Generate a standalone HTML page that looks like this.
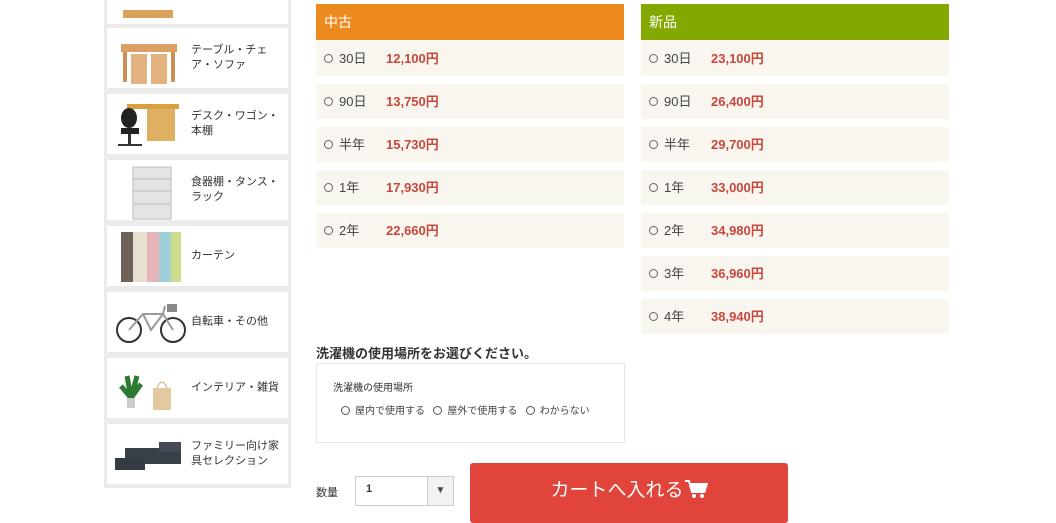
<!DOCTYPE html>
<html><head><meta charset="utf-8"><style>
*{margin:0;padding:0;box-sizing:border-box}
body{width:1056px;height:517px;overflow:hidden;background:#fff;font-family:"Liberation Sans","Noto Sans CJK JP",sans-serif;position:relative;color:#333}
.side{position:absolute;left:104px;top:-10px;width:187px;height:498px;background:#ebebeb}
.card{position:absolute;left:3px;width:181px;height:60px;background:#fff}
.card .t{position:absolute;left:84px;top:50%;transform:translateY(-50%);font-size:11px;line-height:15px;color:#333;width:92px}
.card svg{position:absolute;left:6px;top:4px}
.col{position:absolute;top:4px;width:308px}
.hd{height:36px;color:#fff;font-size:14px;line-height:36px;padding-left:8px}
.row{height:35px;background:#f9f6f0;margin-top:8px;font-size:13px;line-height:35px;padding-left:8px;color:#444;position:relative}
.hd+.row{margin-top:1px}
.row .c{display:inline-block;width:9px;height:9px;border:1px solid #666;border-radius:50%;margin-right:6px;vertical-align:0}
.row .p{color:#c9473b;font-weight:bold;position:absolute;left:70px}
</style></head><body>
<div class="side">
 <div class="card" style="top:-26px"><svg width="70" height="55"><rect x="10" y="42" width="50" height="8" fill="#d9a45a"/></svg></div>
 <div class="card" style="top:38px"><svg width="70" height="56"><rect x="8" y="12" width="56" height="8" fill="#dca063"/><rect x="10" y="20" width="4" height="30" fill="#c99157"/><rect x="58" y="20" width="4" height="30" fill="#c99157"/><rect x="18" y="22" width="16" height="30" fill="#e2b27f"/><rect x="38" y="22" width="16" height="30" fill="#e2b27f"/></svg><div class="t">テーブル・チェア・ソファ</div></div>
 <div class="card" style="top:104px"><svg width="70" height="56"><rect x="14" y="6" width="52" height="5" fill="#d9a040"/><rect x="34" y="11" width="28" height="32" fill="#dfb061"/><ellipse cx="16" cy="20" rx="8" ry="10" fill="#222"/><rect x="8" y="30" width="18" height="6" fill="#222"/><rect x="15" y="36" width="3" height="10" fill="#333"/><rect x="5" y="46" width="24" height="2" fill="#333"/></svg><div class="t">デスク・ワゴン・本棚</div></div>
 <div class="card" style="top:170px"><svg width="70" height="56"><rect x="20" y="3" width="38" height="52" fill="#e4e4e6" stroke="#bbb"/><line x1="20" y1="15" x2="58" y2="15" stroke="#bbb"/><line x1="20" y1="27" x2="58" y2="27" stroke="#bbb"/><line x1="20" y1="40" x2="58" y2="40" stroke="#bbb"/></svg><div class="t">食器棚・タンス・ラック</div></div>
 <div class="card" style="top:236px"><svg width="70" height="56"><rect x="8" y="2" width="12" height="50" fill="#6e6259"/><rect x="20" y="2" width="14" height="50" fill="#e8e0cf"/><rect x="34" y="2" width="12" height="50" fill="#e6b4b8"/><rect x="46" y="2" width="12" height="50" fill="#9fd0d8"/><rect x="58" y="2" width="10" height="50" fill="#cfdc8a"/></svg><div class="t">カーテン</div></div>
 <div class="card" style="top:302px"><svg width="74" height="56"><circle cx="16" cy="34" r="12" fill="none" stroke="#333" stroke-width="2"/><circle cx="60" cy="34" r="12" fill="none" stroke="#333" stroke-width="2"/><path d="M16 34 L30 18 L50 18 L60 34 M30 18 L38 34 L50 18 M52 10 L50 18" stroke="#999" stroke-width="2" fill="none"/><rect x="54" y="8" width="10" height="8" fill="#888"/></svg><div class="t">自転車・その他</div></div>
 <div class="card" style="top:368px"><svg width="70" height="56"><path d="M18 36 L8 24 M18 36 L28 22 M18 36 L14 14 M18 36 L24 14" stroke="#2d7a32" stroke-width="5"/><rect x="14" y="36" width="8" height="10" fill="#ccc"/><rect x="40" y="26" width="18" height="22" fill="#e2c9a0"/><path d="M44 26 Q49 14 54 26" fill="none" stroke="#c9a876"/></svg><div class="t">インテリア・雑貨</div></div>
 <div class="card" style="top:434px"><svg width="74" height="56"><rect x="12" y="20" width="56" height="16" fill="#3a4048"/><rect x="2" y="30" width="30" height="12" fill="#353b42"/><rect x="46" y="14" width="22" height="10" fill="#444b54"/></svg><div class="t">ファミリー向け家具セレクション</div></div>
</div>

<div class="col" style="left:316px"><div class="hd" style="background:#ec8a1e">中古</div>
<div class="row"><span class="c"></span>30日<span class="p">12,100円</span></div>
<div class="row"><span class="c"></span>90日<span class="p">13,750円</span></div>
<div class="row"><span class="c"></span>半年<span class="p">15,730円</span></div>
<div class="row"><span class="c"></span>1年<span class="p">17,930円</span></div>
<div class="row"><span class="c"></span>2年<span class="p">22,660円</span></div>
</div>
<div class="col" style="left:641px"><div class="hd" style="background:#83a800">新品</div>
<div class="row"><span class="c"></span>30日<span class="p">23,100円</span></div>
<div class="row"><span class="c"></span>90日<span class="p">26,400円</span></div>
<div class="row"><span class="c"></span>半年<span class="p">29,700円</span></div>
<div class="row"><span class="c"></span>1年<span class="p">33,000円</span></div>
<div class="row"><span class="c"></span>2年<span class="p">34,980円</span></div>
<div class="row"><span class="c"></span>3年<span class="p">36,960円</span></div>
<div class="row"><span class="c"></span>4年<span class="p">38,940円</span></div>
</div>

<div style="position:absolute;left:316px;top:343px;font-size:13px;font-weight:bold;color:#333">洗濯機の使用場所をお選びください。</div>
<div style="position:absolute;left:316px;top:363px;width:309px;height:80px;border:1px solid #e6e6e6">
 <div style="position:absolute;left:16px;top:15px;font-size:10px;color:#333">洗濯機の使用場所</div>
 <div style="position:absolute;left:24px;top:38px;font-size:10px;color:#444;white-space:nowrap">
 <span style="display:inline-block;width:9px;height:9px;border:1px solid #555;border-radius:50%;vertical-align:-1px;margin-right:5px"></span>屋内で使用する&nbsp;&nbsp;&nbsp;<span style="display:inline-block;width:9px;height:9px;border:1px solid #555;border-radius:50%;vertical-align:-1px;margin-right:5px"></span>屋外で使用する&nbsp;&nbsp;&nbsp;<span style="display:inline-block;width:9px;height:9px;border:1px solid #555;border-radius:50%;vertical-align:-1px;margin-right:5px"></span>わからない</div>
</div>
<div style="position:absolute;left:316px;top:484px;font-size:11px;color:#333">数量</div>
<div style="position:absolute;left:355px;top:476px;width:99px;height:30px;border:1px solid #ccc;background:#fff">
 <span style="position:absolute;left:10px;top:6px;font-size:11px;font-weight:bold">1</span>
 <div style="position:absolute;right:0;top:0;width:26px;height:28px;border-left:1px solid #ccc;background:#f2f2f2;text-align:center;font-size:10px;line-height:28px;color:#444">▼</div>
</div>
<div style="position:absolute;left:470px;top:463px;width:318px;height:60px;background:#e0443a;border-radius:3px;color:#fff;font-size:19px;text-align:center;line-height:56px">カートへ入れる<svg width="24" height="20" viewBox="0 0 24 20" style="vertical-align:-3px"><path d="M1 2h4l3 11h12l3-8H7" fill="none" stroke="#fff" stroke-width="2"/><rect x="7" y="5" width="15" height="8" fill="#fff"/><circle cx="10" cy="17" r="2" fill="#fff"/><circle cx="18" cy="17" r="2" fill="#fff"/></svg></div>
</body></html>
